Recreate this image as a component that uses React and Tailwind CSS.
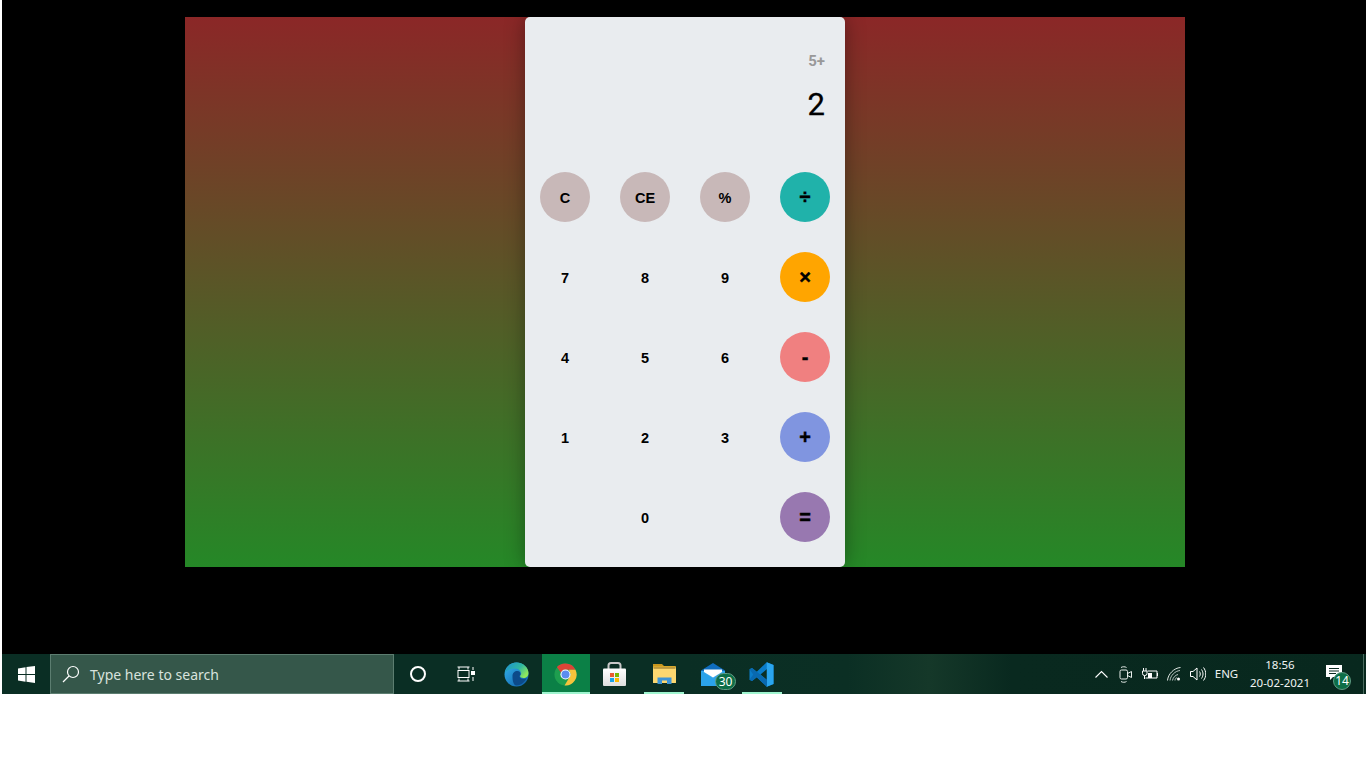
import React from "react";

const Btn = ({ label, color, op }) => (
  <div className="h-[80px] flex items-center justify-center">
    {label && (
      <div className={`w-[50px] h-[50px] rounded-full flex items-center justify-center font-bold text-black ${color || ""} ${op ? "text-[20px] [-webkit-text-stroke:0.4px_black]" : "text-[14.5px] pt-[3px]"}`}>
        {label}
      </div>
    )}
  </div>
);

const keys = [
  ["C", "bg-[#c8b8b8]"], ["CE", "bg-[#c8b8b8]"], ["%", "bg-[#c8b8b8]"], ["÷", "bg-[#20b2aa]", 1],
  ["7"], ["8"], ["9"], ["×", "bg-[#ffa500]", 1],
  ["4"], ["5"], ["6"], ["-", "bg-[#f08080]", 1],
  ["1"], ["2"], ["3"], ["+", "bg-[#8095e0]", 1],
  [""], ["0"], [""], ["=", "bg-[#9878b0]", 1],
];

const Tile = ({ children, underline, active, className = "" }) => (
  <div className={`relative h-full flex items-center justify-center ${active ? "w-[48px] mr-px pr-px bg-[#0b8046]" : "w-[49px] pr-[2px]"} ${className}`}>
    {children}
    {underline && <div className={`absolute bottom-0 h-[2px] bg-[#9ff5cf] ${active ? "left-0 right-0" : "left-[4px] w-[40px]"}`} />}
  </div>
);

const Badge = ({ n, className }) => (
  <div className={`absolute flex items-center justify-center rounded-full bg-[#0d6e47] border border-[#5f9c84] text-white text-[12px] leading-none ${className}`}>{n}</div>
);

const Edge = () => (
  <svg width="25" height="25" viewBox="0 0 25 25">
    <defs>
      <linearGradient id="eg1" x1="0" y1="0" x2="1" y2="1"><stop offset="0" stopColor="#35b5ee" /><stop offset="1" stopColor="#0c59a4" /></linearGradient>
      <linearGradient id="eg2" x1="0" y1="0" x2="1" y2="0.6"><stop offset="0" stopColor="#1b8fd4" /><stop offset="0.6" stopColor="#2fb6a0" /><stop offset="1" stopColor="#8fe85c" /></linearGradient>
    </defs>
    <circle cx="12.5" cy="12.5" r="12" fill="url(#eg1)" />
    <path d="M1 11C2 4 7 .5 12.5.5c6.500 0 12 5 12 10.500 0 3-2 5-5 5-2 0-3.500-1-3.500-2 1-1 1.500-2 1-3.500C16 8 14 6.500 11 6.500 6.500 6.500 3 8 1 11z" fill="url(#eg2)" />
    <path d="M8.500 14c0-3 2-5 5-5 2 0 3 1.500 3 3 0 1-.5 1.500-1 2 0 2 2 3 4 3 1 0 2-.2 3-.8-1 3-5 7-10 7.300-3.500-.2-4-6-4-9.500z" fill="#0c4a8a" />
  </svg>
);

const Chrome = () => (
  <svg width="23" height="23" viewBox="0 0 24 24">
    <circle cx="12" cy="12" r="11.500" fill="#1e9e4f" />
    <path d="M12 .5A11.500 11.500 0 0 1 22.400 7H12a5 5 0 0 0-4.700 3.300L3 4.200A11.500 11.500 0 0 1 12 .5z" fill="#db4437" />
    <path d="M22.400 7A11.500 11.500 0 0 1 11 23.500l4.800-8.200A5 5 0 0 0 16.500 9.500L15.500 7z" fill="#f5c33b" />
    <circle cx="12" cy="12" r="5.300" fill="#fff" />
    <circle cx="12" cy="12" r="4.200" fill="#5a8df0" />
  </svg>
);

const Store = () => (
  <svg width="23" height="24" viewBox="0 0 23 24">
    <defs><linearGradient id="st" x1="0" y1="0" x2="0" y2="1"><stop offset="0" stopColor="#ffffff" /><stop offset="1" stopColor="#dedede" /></linearGradient></defs>
    <path d="M5.500 7V3.500C5.500 1.500 6.500 1 8 1h7c1.500 0 2.500.5 2.500 2.500V7" fill="none" stroke="#c8c8c8" strokeWidth="2" />
    <rect x="0" y="6.500" width="23" height="17.500" rx="1" fill="url(#st)" />
    <rect x="7" y="11" width="4" height="4" fill="#ea5b30" />
    <rect x="12" y="11" width="4" height="4" fill="#7ab800" />
    <rect x="7" y="16" width="4" height="4" fill="#1aa3e8" />
    <rect x="12" y="16" width="4" height="4" fill="#fdb900" />
  </svg>
);

const Folder = () => (
  <svg className="ml-[2px]" width="23" height="22" viewBox="0 0 23 22">
    <path d="M0 1h9l2 2h11.500v6H0z" fill="#c8961e" />
    <rect x="0" y="3.500" width="23" height="2" fill="#e8b83a" />
    <rect x="0" y="4.500" width="23" height="15.500" rx=".5" fill="#fcd770" />
    <rect x="0.500" y="4.500" width="22" height="1" fill="#8a6a20" />
    <path d="M4.500 21v-6.500h14V21h-4.500v-3.500h-5V21z" fill="#3d94d6" />
  </svg>
);

const Mail = () => (
  <svg width="24" height="23" viewBox="0 0 24 23">
    <path d="M0 7.500L12 0l12 7.500V11H0z" fill="#0f6cbd" />
    <rect x="0" y="8" width="24" height="15" fill="#3aa8ec" />
    <path d="M3 6.500h18V9l-9 5.500L3 9z" fill="#ffffff" />
    <path d="M0 8l12 7.500L24 8v15H0z" fill="#2ba3ea" />
  </svg>
);

const VSCode = () => (
  <svg width="25" height="25" viewBox="0 0 100 100">
    <path d="M71 99L31 61 12 76 2 71V29l10-5 19 15L71 1l27 11v76zM72 28L46 50l26 22z" fill="#0a7cc9" />
    <path d="M71 99V72l0-44V1l27 11v76z" fill="#2aa5ee" />
    <path d="M2 29l10-5 60 48v27L31 61 12 76 2 71l15-21z" fill="#0969b0" />
  </svg>
);

export default function App() {
  return (
    <div className="w-full h-[768px] bg-white pl-[2px] overflow-hidden" style={{ fontFamily: '"Liberation Sans", Arial, sans-serif' }}>
      <div className="h-[654px] bg-black pt-[17px] pl-[183px]">
        <div className="w-[1000px] h-[550px] flex justify-center bg-[linear-gradient(180deg,#8b2727_0%,#258827_100%)]">
          <div className="w-[320px] h-full bg-[#e9ecef] rounded-[5px] shadow-[0_0_20px_rgba(0,0,0,0.35)] flex flex-col">
            <div className="h-[140px] flex flex-col items-end pr-5 pt-[34px]" style={{ fontFamily: 'Roboto, sans-serif' }}>
              <div className="text-[15px] leading-5 font-bold text-[#999999]">5+</div>
              <div className="mt-[14px] text-[31px] leading-10 text-black [-webkit-text-stroke:0.3px_black]">2</div>
            </div>
            <div className="grid grid-cols-4">
              {keys.map(([l, c, o], i) => <Btn key={i} label={l} color={c} op={o} />)}
            </div>
          </div>
        </div>
      </div>

      <div className="h-[40px] flex items-stretch text-white bg-[linear-gradient(90deg,#0a2e24_0%,#0a2e24_50%,#0b2f24_62%,#153829_68%,#09291f_74%,#08281e_100%)]" style={{ fontFamily: '"Noto Sans", sans-serif' }}>
        <div className="w-[48px] flex items-center justify-center">
          <svg width="17" height="17" viewBox="0 0 17 17" fill="#fff">
            <path d="M0 2.500L7.500 1.300V8H0zM8.500 1.100L17 0v8H8.500zM0 9h7.500v6.700L0 14.500zM8.500 9H17v8l-8.500-1.200z" />
          </svg>
        </div>
        <div className="w-[344px] bg-[#35574a] border border-[#5c7d70] flex items-center pl-[11px]">
          <svg width="18" height="18" viewBox="0 0 18 18" fill="none" stroke="#ffffff" strokeWidth="1.200">
            <circle cx="11" cy="7" r="5.500" />
            <path d="M7 11L1 17" />
          </svg>
          <span className="ml-[10px] pt-[2px] text-[14px] text-[#d8e2dd] leading-none">Type here to search</span>
        </div>
        <div className="w-[48px] flex items-center justify-center">
          <div className="w-[16px] h-[16px] rounded-full border-2 border-white" />
        </div>
        <div className="w-[48px] flex items-center justify-center">
          <svg width="18" height="16" viewBox="0 0 18 16" fill="none" stroke="#fff" strokeWidth="1">
            <path d="M0.500 1h12M0.500 15h12M2 1v2.500M11 1v2.500M2 15v-2.500M11 15v-2.500" />
            <rect x="1" y="4.500" width="11" height="7" />
            <path d="M16 1v3M16 11v4" />
            <rect x="14.500" y="5.500" width="3" height="3" fill="#fff" />
          </svg>
        </div>
        <div className="w-[3px]" />
        <Tile><Edge /></Tile>
        <Tile active underline><Chrome /></Tile>
        <Tile><Store /></Tile>
        <Tile underline><Folder /></Tile>
        <Tile>
          <Mail />
          <Badge n="30" className="w-[21px] h-[17px] left-[26px] top-[19px]" />
        </Tile>
        <Tile underline><VSCode /></Tile>

        <div className="flex-1" />
        <div className="w-[24px] flex items-center justify-center">
          <svg width="13" height="8" viewBox="0 0 13 8" fill="none" stroke="#fff" strokeWidth="1.100"><path d="M.5 7.500L6.500 1.500l6 6" /></svg>
        </div>
        <div className="w-[25px] flex items-center justify-center">
          <svg width="13" height="17" viewBox="0 0 13 17" fill="none" stroke="#e8eeeb" strokeWidth="1">
            <rect x="1" y="4" width="7.500" height="9" rx="1.500" />
            <path d="M8.500 7.500L12.500 5.500V11.500L8.500 9.500" />
            <path d="M2 1.500C3.500.5 6 .5 7.500 1.500M2 15.500c1.500 1 4 1 5.500 0" />
          </svg>
        </div>
        <div className="w-[24px] flex items-center justify-center">
          <svg width="16" height="12" viewBox="0 0 16 12" fill="none" stroke="#fff" strokeWidth="1">
            <path d="M1.500 0v3M4 0v3M.5 3h4.500v2.500a2 2 0 0 1-2 2h-.5a2 2 0 0 1-2-2zM2.500 7.500v3.500" />
            <path d="M5.500 3H15v7H3.500" />
            <rect x="6" y="5" width="4" height="5" fill="#fff" stroke="none" />
            <path d="M15.500 5v3" />
          </svg>
        </div>
        <div className="w-[24px] flex items-center justify-center">
          <svg width="14" height="14" viewBox="0 0 14 14" fill="none" stroke="#dfe7e3" strokeWidth="1">
            <path d="M.5 13.500C1 7 7 1 13.500.5" />
            <path d="M3 13.500C3.500 8.500 8 4 13 3.500" opacity=".8" />
            <path d="M5.500 13.500C6 10.500 8.500 8 11 7.500" opacity=".8" />
            <path d="M8 13.500C8 12 9 11 10 10.500" opacity=".8" />
            <circle cx="11.500" cy="12" r="1.500" fill="#fff" stroke="none" />
          </svg>
        </div>
        <div className="w-[24px] flex items-center justify-center">
          <svg width="16" height="14" viewBox="0 0 16 14" fill="none" stroke="#fff" strokeWidth="1">
            <path d="M.5 4.500h2.500L7 1v12L3 9.500H.5z" />
            <path d="M9.500 4.500c1 1.500 1 3.500 0 5M11.500 2.500c2 3 2 6 0 9M13.500.5c3 4 3 9 0 13" />
          </svg>
        </div>
        <div className="w-[33px] flex items-center justify-center text-[11.500px] text-[#f0f4f2]">ENG</div>
        <div className="w-[74px] flex flex-col items-center justify-center text-[11.500px] leading-[18px] text-[#f0f4f2]">
          <div>18:56</div>
          <div>20-02-2021</div>
        </div>
        <div className="relative w-[36px] flex items-center justify-center">
          <svg className="mr-[2px] mb-[3px]" width="16" height="15" viewBox="0 0 16 15">
            <path d="M0 0h16v12H7l-3 3v-3H0z" fill="#fff" />
            <path d="M3 3.500h10M3 6h10M3 8.500h7" stroke="#0a2a20" strokeWidth="1" />
          </svg>
          <Badge n="14" className="w-[18px] h-[18px] left-[16px] top-[18px]" />
        </div>
        <div className="w-[10px]" />
        <div className="w-px bg-[#4a6a5e]" />
        <div className="w-[2px]" />
      </div>
    </div>
  );
}
